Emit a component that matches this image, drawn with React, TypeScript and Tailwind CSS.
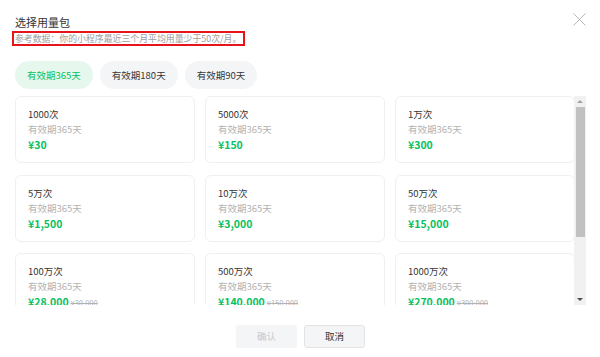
import React, { useState } from 'react';

interface Pack {
    name: string;
    price: string;
    original?: string;
}

const packs: Pack[] = [
    { name: '1000次', price: '¥30' },
    { name: '5000次', price: '¥150' },
    { name: '1万次', price: '¥300' },
    { name: '5万次', price: '¥1,500' },
    { name: '10万次', price: '¥3,000' },
    { name: '50万次', price: '¥15,000' },
    { name: '100万次', price: '¥28,000', original: '¥30,000' },
    { name: '500万次', price: '¥140,000', original: '¥150,000' },
    { name: '1000万次', price: '¥270,000', original: '¥300,000' },
];

const tabs = ['有效期365天', '有效期180天', '有效期90天'];

const Scrollbar = () => (
    <div className="w-[12px] h-full bg-[#f1f1f1] flex flex-col items-center">
        <div className="h-[11px] w-full flex items-center justify-center">
            <div className="w-0 h-0 border-l-[3px] border-r-[3px] border-b-[3px] border-l-transparent border-r-transparent border-b-[#a3a3a3]" />
        </div>
        <div className="w-[9px] h-[130px] bg-[#c1c1c1]" />
        <div className="flex-1" />
        <div className="h-[11px] w-full flex items-center justify-center">
            <div className="w-0 h-0 border-l-[3px] border-r-[3px] border-t-[3px] border-l-transparent border-r-transparent border-t-[#505050]" />
        </div>
    </div>
);

export default function App() {
    const [activeTab, setActiveTab] = useState(0);

    return (
        <div
            className="w-[600px] h-[357px] bg-white overflow-hidden flex flex-col"
            style={{ fontFamily: '"Noto Sans CJK SC", "Noto Sans", sans-serif' }}
        >
            {/* Header */}
            <div className="flex justify-between items-start pl-[15px] pr-[14px] pt-[14px]">
                <div className="text-[11px] leading-[16px] text-[#353535]">选择用量包</div>
                <button className="mt-[-1px] p-0">
                    <svg width="13" height="13" viewBox="0 0 13 13">
                        <path d="M0.5 0.5 L12.5 12.5 M12.5 0.5 L0.5 12.5" stroke="#b8b8b8" strokeWidth="1" />
                    </svg>
                </button>
            </div>
            <div className="pl-[12px] mt-[1px] flex">
                <div className="border-2 border-[#e8141b] pl-[1px] pr-[2px] text-[8.9px] leading-[11px] text-[#a0a0a0] whitespace-nowrap">
                    参考数据：你的小程序最近三个月平均用量少于50次/月。
                </div>
            </div>

            {/* Tabs */}
            <div className="flex gap-[7px] pl-[15px] mt-[15px]">
                {tabs.map((t, i) => (
                    <button
                        key={t}
                        onClick={() => setActiveTab(i)}
                        className={`h-[28px] rounded-full px-[12px] text-[9.5px] leading-[28px] ${i === activeTab ? 'bg-[#e6f8ee] text-[#07c160]' : 'bg-[#f4f5f7] text-[#353535]'}`}
                    >
                        {t}
                    </button>
                ))}
            </div>

            {/* Pack list */}
            <div className="flex ml-[15px] mt-[7px] h-[209px] w-[571px]">
                <div className="w-[560px] h-full overflow-hidden">
                    <div className="grid grid-cols-3 gap-x-[10px] gap-y-[11.5px]">
                        {packs.map(p => (
                            <div key={p.name} className="h-[67px] border border-[#efefef] rounded-[6px] pl-[12px] pt-[10px]">
                                <div className="text-[9.5px] leading-[15px] text-[#353535]">{p.name}</div>
                                <div className="text-[9.5px] leading-[15px] text-[#b2b2b2]">有效期365天</div>
                                <div className="flex items-baseline leading-[15px]">
                                    <span className="text-[10.5px] font-bold text-[#07c160]">{p.price}</span>
                                    {p.original && (
                                        <span className="ml-[2px] text-[7.5px] text-[#b2b2b2] line-through">{p.original}</span>
                                    )}
                                </div>
                            </div>
                        ))}
                    </div>
                </div>
                <div className="ml-[-1px]">
                    <Scrollbar />
                </div>
            </div>

            {/* Footer */}
            <div className="flex justify-center gap-[7px] mt-[20px] pl-[1px]">
                <button className="w-[61px] h-[23px] rounded-[3px] bg-[#f4f5f7] text-[9.5px] text-[#c9c9c9]" disabled>
                    确认
                </button>
                <button className="w-[61px] h-[23px] rounded-[3px] bg-[#f4f5f7] border border-[#e3e3e3] text-[9.5px] text-[#353535]">
                    取消
                </button>
            </div>
        </div>
    );
}
